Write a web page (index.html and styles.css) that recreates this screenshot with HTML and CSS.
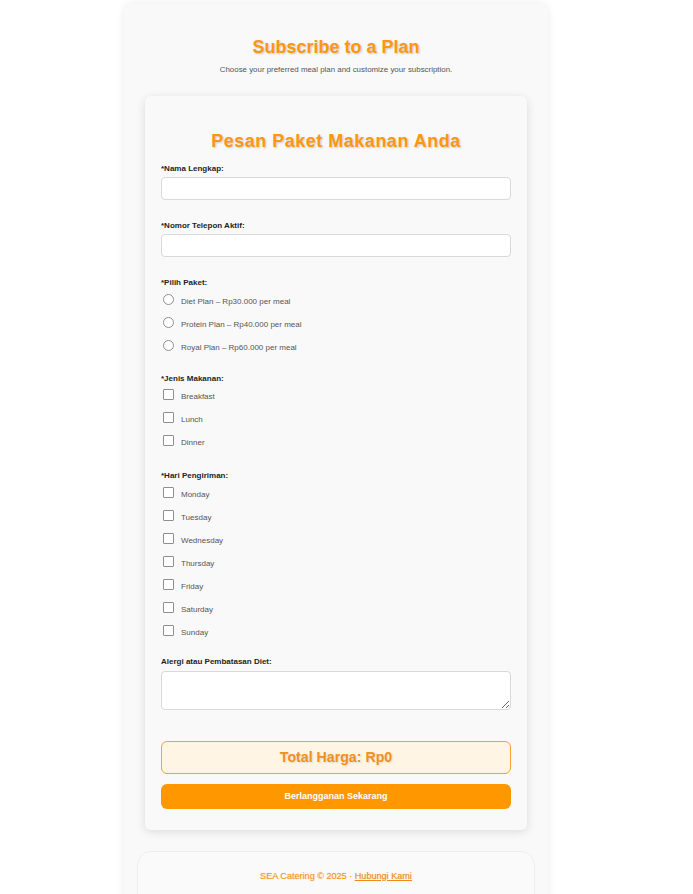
FILE: index.html
```html
<!DOCTYPE html>
<html lang="id">
<head>
<meta charset="utf-8">
<title>Subscribe to a Plan</title>
<link rel="stylesheet" href="styles.css">
</head>
<body>
<div class="page">
  <main class="shell">
    <h1 class="title">Subscribe to a Plan</h1>
    <p class="subtitle">Choose your preferred meal plan and customize your subscription.</p>

    <form class="card">
      <h2 class="card-title">Pesan Paket Makanan Anda</h2>

      <div class="group">
        <label class="label">*Nama Lengkap:</label>
        <input class="field" type="text">
      </div>

      <div class="group">
        <label class="label">*Nomor Telepon Aktif:</label>
        <input class="field" type="text">
      </div>

      <div class="group options">
        <span class="label">*Pilih Paket:</span>
        <label class="opt"><input type="radio" name="plan" class="radio"><span>Diet Plan – Rp30.000 per meal</span></label>
        <label class="opt"><input type="radio" name="plan" class="radio"><span>Protein Plan – Rp40.000 per meal</span></label>
        <label class="opt"><input type="radio" name="plan" class="radio"><span>Royal Plan – Rp60.000 per meal</span></label>
      </div>

      <div class="group options wide">
        <span class="label">*Jenis Makanan:</span>
        <label class="opt"><input type="checkbox" class="check"><span>Breakfast</span></label>
        <label class="opt"><input type="checkbox" class="check"><span>Lunch</span></label>
        <label class="opt"><input type="checkbox" class="check"><span>Dinner</span></label>
      </div>

      <div class="group options narrow">
        <span class="label">*Hari Pengiriman:</span>
        <label class="opt"><input type="checkbox" class="check"><span>Monday</span></label>
        <label class="opt"><input type="checkbox" class="check"><span>Tuesday</span></label>
        <label class="opt"><input type="checkbox" class="check"><span>Wednesday</span></label>
        <label class="opt"><input type="checkbox" class="check"><span>Thursday</span></label>
        <label class="opt"><input type="checkbox" class="check"><span>Friday</span></label>
        <label class="opt"><input type="checkbox" class="check"><span>Saturday</span></label>
        <label class="opt"><input type="checkbox" class="check"><span>Sunday</span></label>
      </div>

      <div class="group last">
        <label class="label">Alergi atau Pembatasan Diet:</label>
        <textarea class="area"></textarea>
      </div>

      <div class="total">Total Harga: Rp0</div>
      <button type="button" class="submit">Berlangganan Sekarang</button>
    </form>

    <footer class="footer">
      <p>SEA Catering © 2025 · <a href="#" class="footer-link">Hubungi Kami</a></p>
    </footer>
  </main>
</div>
</body>
</html>
```

FILE: styles.css
```css
* {
  box-sizing: border-box;
}

html, body {
  margin: 0;
  padding: 0;
  background: #ffffff;
}

body {
  font-family: "Liberation Sans", Arial, sans-serif;
  color: #333;
}

.page {
  width: 672px;
}

.shell {
  width: 424px;
  margin: 4px auto 0;
  padding: 32px 0 40px;
  background: #f9f9f9;
  border-radius: 8px;
  box-shadow: 0 0 10px rgba(0, 0, 0, 0.08);
}

.title {
  margin: 0;
  font-size: 18px;
  line-height: 22px;
  font-weight: bold;
  text-align: center;
  color: #ff960f;
  text-shadow: 1px 1px 2px rgba(0, 0, 0, 0.2);
}

.subtitle {
  margin: 7px 0 0;
  font-size: 7.9px;
  line-height: 10px;
  text-align: center;
  color: #555;
}

.card {
  display: flex;
  flex-direction: column;
  margin: 21px 21px 0;
  padding: 16px 16px 21px;
  background: #f9f9f9;
  border-radius: 6px;
  box-shadow: 0 2px 10px rgba(0, 0, 0, 0.12);
}

.card-title {
  margin: 18px 0 12px;
  font-size: 18px;
  line-height: 22px;
  font-weight: bold;
  letter-spacing: 0.5px;
  text-align: center;
  color: #ff960f;
  text-shadow: 1px 1px 2px rgba(0, 0, 0, 0.2);
}

.group {
  display: flex;
  flex-direction: column;
  margin-bottom: 21px;
}

.group.options {
  margin-bottom: 15px;
}

.group.options.wide {
  margin-bottom: 17px;
}

.group.options.narrow {
  margin-bottom: 13px;
}

.group.last {
  margin-bottom: 31px;
}

.label {
  display: block;
  font-size: 8px;
  line-height: 10px;
  font-weight: bold;
  color: #1e1e1e;
  margin-bottom: 3px;
}

.options .label {
  margin-bottom: 1.5px;
}

.field {
  width: 100%;
  height: 23px;
  margin: 0;
  padding: 4px 6px;
  background: #fff;
  border: 1px solid #d9d9d9;
  border-radius: 4px;
  font-family: inherit;
  font-size: 8px;
}

.opt {
  display: flex;
  align-items: center;
  height: 23px;
  font-size: 8px;
  color: #555;
}

.radio,
.check {
  appearance: none;
  -webkit-appearance: none;
  flex: none;
  width: 11px;
  height: 11px;
  margin: -4px 7px 0 2px;
  background: #fff;
  border: 1px solid #8f8f8f;
}

.radio {
  border-radius: 50%;
}

.check {
  border-radius: 1px;
}

.area {
  display: block;
  width: 100%;
  height: 39px;
  margin: 1px 0 0;
  padding: 4px 6px;
  background: #fff;
  border: 1px solid #d9d9d9;
  border-radius: 4px;
  font-family: inherit;
  font-size: 8px;
  resize: vertical;
}

.total {
  height: 33px;
  display: flex;
  align-items: center;
  justify-content: center;
  background: #fff5e5;
  border: 1px solid #f5a031;
  border-radius: 6px;
  font-size: 14.2px;
  font-weight: bold;
  color: #f0901e;
  text-shadow: 1px 1px 2px rgba(0, 0, 0, 0.12);
}

.submit {
  height: 25px;
  margin-top: 10px;
  border: none;
  border-radius: 6px;
  background: #ff9800;
  color: #fff;
  font-family: inherit;
  font-size: 9px;
  font-weight: bold;
  cursor: pointer;
}

.footer {
  margin: 21px 13px 0;
  padding: 19px 0 30px;
  background: #fafafa;
  border: 1px solid #eeeeee;
  border-radius: 14px;
  text-align: center;
}

.footer p {
  margin: 0;
  font-size: 9.1px;
  line-height: 10px;
  color: #f5941d;
  text-shadow: 0 0 1px rgba(245, 148, 29, 0.5);
}

.footer-link {
  color: #f08a1a;
  text-decoration: underline;
}
```
